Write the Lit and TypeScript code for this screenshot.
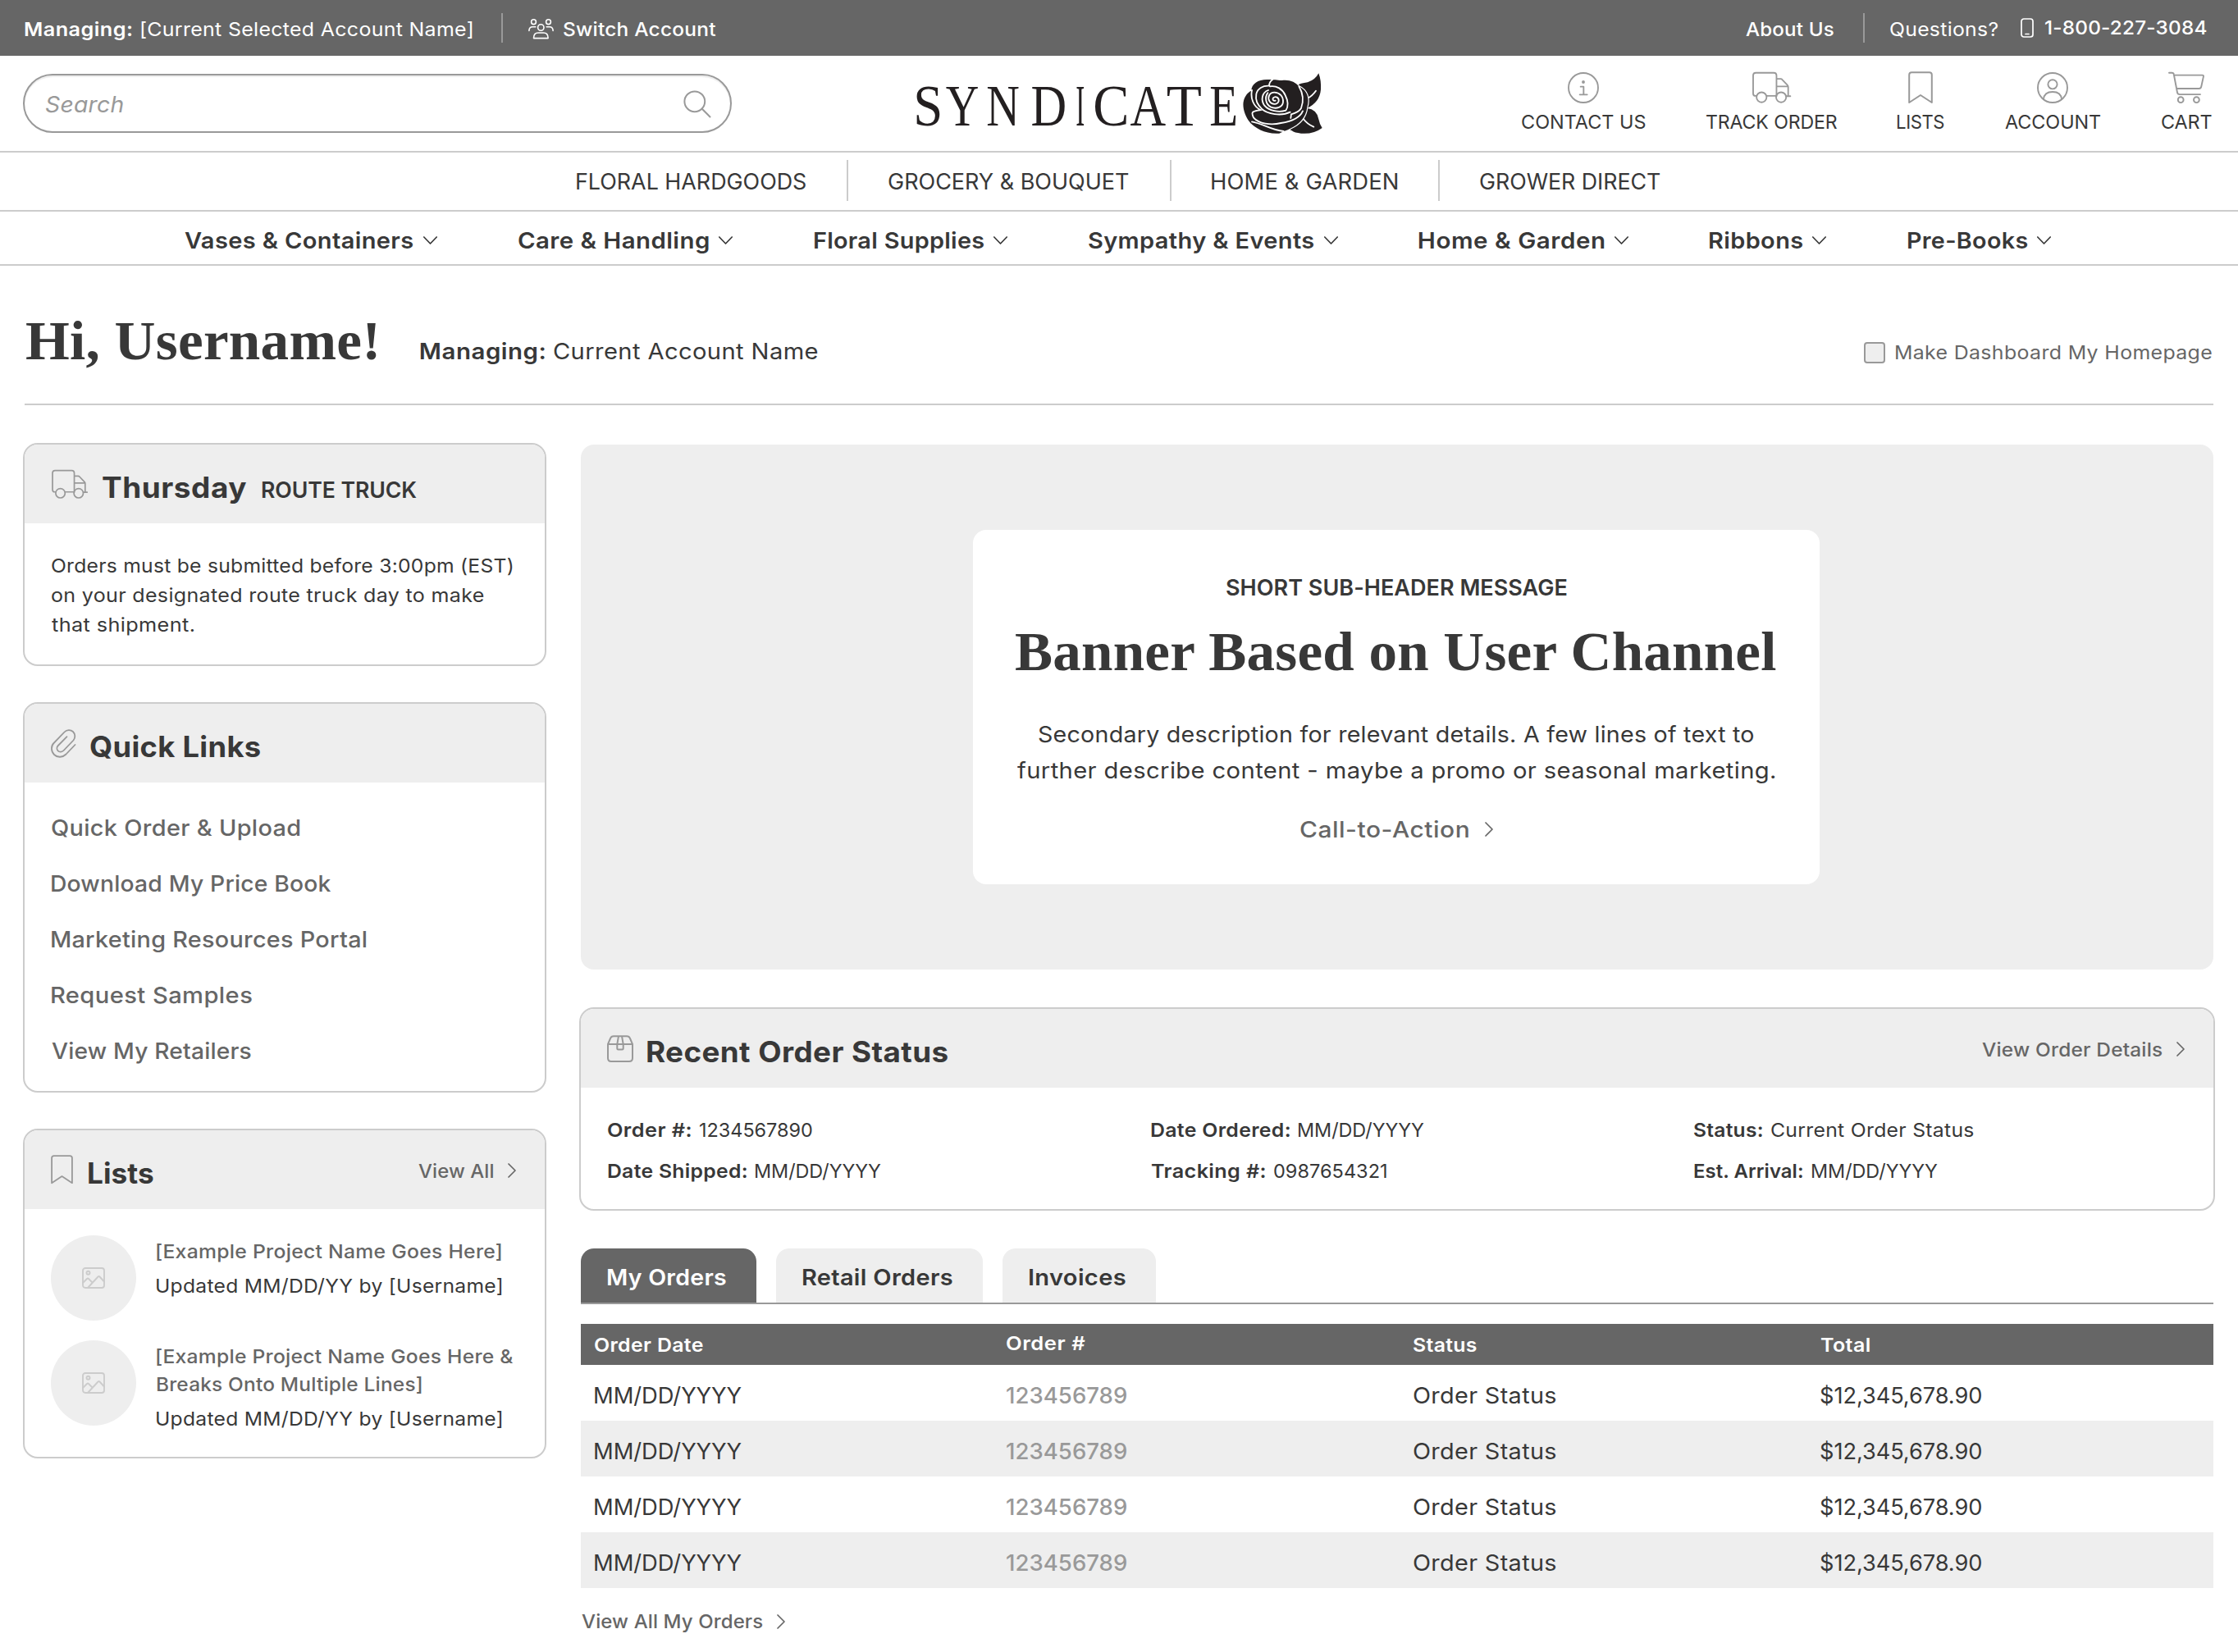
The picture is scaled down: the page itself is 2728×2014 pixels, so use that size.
import { LitElement, html, css, svg, nothing } from "lit";
import { customElement, property, query } from "lit/decorators.js";

/** A run of text whose letters are widened and spaced so that its ink fills the given width. */
@customElement("ink-text")
class InkText extends LitElement {
  @property({ type: Number }) w = 0;
  @property() text = "";
  @query("span") private run!: HTMLElement;

  static styles = css`
    :host {
      display: inline-block;
      white-space: pre;
      flex: none;
    }
    span {
      display: inline-block;
      transform-origin: 0 50%;
    }
  `;

  updated() {
    const cs = getComputedStyle(this);
    const ctx = document.createElement("canvas").getContext("2d")!;
    ctx.font = `${cs.fontStyle} ${cs.fontWeight} ${cs.fontSize} ${cs.fontFamily}`;
    const m = ctx.measureText(this.text);
    const ink = m.actualBoundingBoxLeft + m.actualBoundingBoxRight;
    const stretch = 1 + (this.w / ink - 1) * 0.7;
    this.style.width = `${this.w}px`;
    this.run.style.width = `${this.w}px`;
    this.run.style.letterSpacing = `${(this.w / stretch - ink) / (this.text.length - 1)}px`;
    this.run.style.textIndent = `${m.actualBoundingBoxLeft}px`;
    this.run.style.transform = `scaleX(${stretch})`;
  }

  render() {
    return html`<span>${this.text}</span>`;
  }
}

const t = (text: string, w: number, cls = "") =>
  html`<ink-text class=${cls || nothing} .text=${text} .w=${w}></ink-text>`;

const truck = html`<svg class="ico truck" viewBox="706 33 148 120">
  <path d="M724 123h-3q-9 0-9-9V48q0-10 10-10h66q10 0 10 10v76M763 123h34M798 60h15q4 0 6 3l19 20q3 3 3 7v33M798 88h43M834 124h15" />
  <circle cx="743" cy="128" r="18.5" /><circle cx="815" cy="128" r="18.5" />
</svg>`;
const bookmark = html`<svg class="ico bookmark" viewBox="0 0 30 40">
  <path d="M1.2 38V4.200q0-3 3-3h21.600q3 0 3 3V38L15 29z" />
</svg>`;
const right = html`<svg class="ico chev" viewBox="0 0 10 18"><path d="M1 1l8 8-8 8" /></svg>`;
const down = html`<svg class="ico down" viewBox="0 0 17 10"><path d="M.8 1l7.700 8 7.700-8" /></svg>`;
const picture = html`<svg class="ico picture" viewBox="0 0 28 26">
  <rect x="1" y="1" width="26" height="24" rx="3" />
  <circle cx="7.500" cy="6.800" r="2" />
  <path d="M1 19l5-5q1-1 2 0l4 4M7 25l12.500-13.500q1-1 2 0L27 17.500" />
</svg>`;
const infoIcon = html`<svg class="ico tool" viewBox="33 32 120 120" stroke-width="5.600">
  <circle cx="93" cy="92" r="54" />
  <circle cx="93" cy="71" r="3" /><path d="M83 88h11v29M80 117h27" />
</svg>`;
const accountIcon = html`<svg class="ico tool" viewBox="0 0 40 40" stroke-width="1.900">
  <circle cx="20" cy="20" r="18" /><circle cx="20" cy="15.800" r="5.600" />
  <path d="M9 34c.5-6 5-9 11-9s10.500 3 11 9" />
</svg>`;
const cartIcon = html`<svg class="ico cart" viewBox="0 0 44 40" stroke-width="1.900">
  <path d="M1 1.700h3.500q2 0 2.300 2l4.200 22q.4 2.400 3 2.400h25M7 4.600h34.500q1.800 0 1.400 1.800l-2.700 12.400q-.5 2.200-2.700 2.200H10.300" />
  <circle cx="15.200" cy="34.700" r="3.400" /><circle cx="34.400" cy="34.700" r="3.400" />
</svg>`;
const peopleIcon = html`<svg class="ico people" viewBox="0 0 31 25">
  <circle cx="6.500" cy="3.700" r="2.900" /><circle cx="24.500" cy="3.700" r="2.900" />
  <circle cx="15.300" cy="10.500" r="3.700" />
  <path d="M.9 14.500c0-3.300 1.800-4.800 4.300-4.800h3.600M30.100 14.500c0-3.300-1.800-4.800-4.300-4.800h-3.600M6.500 23.600c0-4.500 2.300-6.600 5.500-6.600h6.600c3.200 0 5.500 2.100 5.500 6.600z" />
</svg>`;
const phoneIcon = html`<svg class="ico phone" viewBox="0 0 16 24">
  <rect x="1" y="1" width="14" height="22" rx="3" /><path d="M6 19.500h4" />
</svg>`;
const searchIcon = html`<svg class="ico lens" viewBox="0 0 34 34">
  <circle cx="13.800" cy="13.800" r="12.400" /><path d="M22.800 22.800L32.500 32.500" />
</svg>`;
const clipIcon = html`<svg class="ico clip" viewBox="0 0 31 35">
  <path d="M29.500 19L18.500 30.500C14.500 34.500 8 35 4 31C0 27 0 20.500 3.500 17L16.500 3.500C19.500.5 24 .3 27 3C30 6 30 10.500 27.500 13.500L15.500 26C13.500 28 10.500 28 8.700 26.300C7 24.500 7 21.800 8.800 20L19.500 9.200" />
</svg>`;
const boxIcon = html`<svg class="ico box" viewBox="0 0 32 33">
  <path d="M1 11L4 4Q5 1.200 8 1.200H24Q27 1.200 28 4L31 11V28q0 4-4 4H5q-4 0-4-4zM1 11H31M14 1.200L12.300 11V16q0 1.500 1.500 1.500h4.400q1.500 0 1.500-1.500V11L18 1.200" />
</svg>`;

/* letter, left edge, horizontal scale */
const logoLetters: [string, number, number][] = [
  ["S", 3.3, 0.9], ["Y", 42.8, 0.78], ["N", 92.3, 0.78], ["D", 146.5, 0.84], ["I", 201.3, 0.46],
  ["C", 222.2, 0.92], ["A", 267.6, 0.84], ["T", 311.8, 0.98], ["E", 364.3, 0.79],
];
const logo = html`<svg class="logo" viewBox="0 0 512 90">
  ${logoLetters.map(([c, x, s]) => svg`<text transform="translate(${x} 72.5) scale(${s} 1)">${c}</text>`)}
  <g transform="translate(396 0) scale(.3333)">
    <path class="ink" d="M222 74Q238 64 264 61Q292 52 304 28Q314 54 312 88Q308 134 262 156Q298 160 304 196Q308 216 317 228Q284 252 240 248Q216 246 206 238L170 220L200 90z" />
    <path class="cut" d="M262 120Q280 112 294 92M246 192Q262 214 286 224" />
    <path class="halo" d="M160 248C110 252 66 226 52 206C34 184 24 150 30 128C34 112 44 98 58 92C58 66 84 50 118 51C140 50 160 54 170 54C196 50 220 60 232 76C262 90 272 120 262 152C258 190 232 216 200 230C190 236 174 240 160 248z" />
    <path class="cut" d="M60 90C54 120 66 150 92 162C66 168 54 166 66 190C84 212 130 220 166 210C204 204 236 190 246 166" />
    <path class="cut" d="M60 205C100 212 130 236 176 240" />
    <path class="cut" d="M136 50C126 58 122 66 124 74C100 72 80 84 76 104C72 128 80 142 96 158C116 178 168 186 200 170" />
    <path class="cut" d="M232 76C246 100 250 130 240 156C234 166 226 172 204 178L202 192" />
    <path class="cut" d="M126 76C150 72 172 86 182 108C192 128 196 146 184 164C160 172 122 166 106 146C92 126 96 98 120 90" />
    <path class="cut" d="M118 100C106 116 110 142 130 152C150 160 172 152 174 134C176 112 160 98 142 98C124 98 116 116 124 130C132 144 154 144 158 130C160 116 146 110 138 118C134 124 138 130 146 128" />
  </g>
</svg>`;

@customElement("app-root")
class AppRoot extends LitElement {
  private channels: [string, number][] = [
    ["FLORAL HARDGOODS", 279], ["GROCERY & BOUQUET", 293], ["HOME & GARDEN", 226], ["GROWER DIRECT", 220],
  ];
  private categories: [string, number][] = [
    ["Vases & Containers", 278], ["Care & Handling", 232], ["Floral Supplies", 206],
    ["Sympathy & Events", 274], ["Home & Garden", 225], ["Ribbons", 113], ["Pre-Books", 145],
  ];
  private links: [string, number][] = [
    ["Quick Order & Upload", 302], ["Download My Price Book", 341], ["Marketing Resources Portal", 383],
    ["Request Samples", 244], ["View My Retailers", 243],
  ];
  private details: [string, number, string, number][] = [
    ["Order #:", 101, "1234567890", 137], ["Date Ordered:", 169, "MM/DD/YYYY", 153], ["Status:", 83, "Current Order Status", 247],
    ["Date Shipped:", 169, "MM/DD/YYYY", 153], ["Tracking #:", 139, "0987654321", 137], ["Est. Arrival:", 132.5, "MM/DD/YYYY", 153],
  ];

  render() {
    return html`
      <div class="topbar">
        ${t("Managing:", 130.5, "b")}
        ${t("[Current Selected Account Name]", 403, "acct")}
        <i class="vline"></i>${peopleIcon}${t("Switch Account", 185.5, "m")}
        <span class="grow"></span>
        ${t("About Us", 107, "m")}<i class="vline"></i>${t("Questions?", 131)}
        <span class="tel">${phoneIcon}${t("1-800-227-3084", 197, "m")}</span>
      </div>

      <header class="header">
        <div class="search">${t("Search", 96)}${searchIcon}</div>
        ${logo}
        <nav class="tools">
          <a>${infoIcon}${t("CONTACT US", 150.5)}</a>
          <a>${truck}${t("TRACK ORDER", 159.5)}</a>
          <a>${bookmark}${t("LISTS", 56.5)}</a>
          <a>${accountIcon}${t("ACCOUNT", 117)}</a>
          <a>${cartIcon}${t("CART", 61.5)}</a>
        </nav>
      </header>

      <nav class="channels">
        ${this.channels.map(([n, w], i) => html`${i ? html`<i class="vline"></i>` : nothing}${t(n, w)}`)}
      </nav>
      <nav class="categories">
        ${this.categories.map(([n, w]) => html`<a>${t(n, w)}${down}</a>`)}
      </nav>

      <section class="hello">
        ${t("Hi, Username!", 426.5, "title")}
        ${t("Managing:", 151, "b who")}
        ${t("Current Account Name", 321.5, "name")}
        <span class="grow"></span>
        <label class="home"><i class="check"></i>${t("Make Dashboard My Homepage", 385)}</label>
      </section>

      <main class="content">
        <div class="col left">
          <section class="card route">
            <div class="head">${truck}<div class="base">${t("Thursday", 175.5, "h")}${t("ROUTE TRUCK", 189, "sub")}</div></div>
            <div class="copy">
              ${t("Orders must be submitted before 3:00pm (EST)", 562)}
              ${t("on your designated route truck day to make", 526.5)}
              ${t("that shipment.", 173)}
            </div>
          </section>
          <section class="card quick">
            <div class="head">${clipIcon}<div class="base">${t("Quick Links", 207.5, "h")}</div></div>
            <div class="links">${this.links.map(([n, w]) => t(n, w))}</div>
          </section>
          <section class="card lists">
            <div class="head">${bookmark}<div class="base">${t("Lists", 79, "h")}</div>
              <span class="grow"></span><a class="more">${t("View All", 91.5)}${right}</a></div>
            <div class="projects">
              <div class="project"><span class="thumb">${picture}</span>
                <div class="lines">
                  ${t("[Example Project Name Goes Here]", 420, "m")}
                  ${t("Updated MM/DD/YY by [Username]", 420, "when")}
                </div></div>
              <div class="project"><span class="thumb">${picture}</span>
                <div class="lines">
                  ${t("[Example Project Name Goes Here &", 435, "m")}
                  ${t("Breaks Onto Multiple Lines]", 323, "m")}
                  ${t("Updated MM/DD/YY by [Username]", 420, "when")}
                </div></div>
            </div>
          </section>
        </div>

        <div class="col right">
          <section class="banner"><div class="promo">
            ${t("SHORT SUB-HEADER MESSAGE", 414.5, "sub")}
            ${t("Banner Based on User Channel", 929, "title")}
            <div class="desc">
              ${t("Secondary description for relevant details. A few lines of text to", 872)}
              ${t("further describe content - maybe a promo or seasonal marketing.", 923.5)}
            </div>
            <a class="cta">${t("Call-to-Action", 205)}${right}</a>
          </div></section>

          <section class="card recent">
            <div class="head">${boxIcon}<div class="base">${t("Recent Order Status", 366.5, "h")}</div>
              <span class="grow"></span><a class="more">${t("View Order Details", 219.5)}${right}</a></div>
            <div class="details">
              ${this.details.map(([k, kw, v, vw]) => html`<div class="pair">${t(k, kw, "b")}${t(v, vw)}</div>`)}
            </div>
          </section>

          <div class="tabs">
            <a class="tab on">${t("My Orders", 143.5)}</a>
            <a class="tab">${t("Retail Orders", 181.5)}</a>
            <a class="tab">${t("Invoices", 116.5)}</a>
          </div>
          <div class="table">
            <div class="row th">${t("Order Date", 131.5)}${t("Order #", 95.5, "up")}${t("Status", 76.5)}${t("Total", 60)}</div>
            ${[0, 1, 2, 3].map(() => html`<div class="row">
              ${t("MM/DD/YYYY", 178.5)}${t("123456789", 146, "num")}${t("Order Status", 174)}${t("$12,345,678.90", 196)}
            </div>`)}
          </div>
          <a class="all">${t("View All My Orders", 220.5)}${right}</a>
        </div>
      </main>
    `;
  }

  static styles = css`
    :host {
      display: flex;
      flex-direction: column;
      width: 2728px;
      height: 2014px;
      overflow: hidden;
      background: #fff;
      color: #383838;
      font: 400 23.5px/24px Inter, "Open Sans", "Liberation Sans", sans-serif;
    }
    * { box-sizing: border-box; }
    .ico {
      flex: none;
      display: block;
      fill: none;
      stroke: #999;
      stroke-linecap: round;
      stroke-linejoin: round;
      overflow: visible;
    }
    .grow { flex: 1; }
    .b { font-weight: 600; }
    .m { font-weight: 500; }
    .vline { flex: none; width: 2px; background: #ccc; }

    .topbar {
      flex: none;
      display: flex;
      align-items: center;
      height: 68px;
      padding: 3px 38px 0 30px;
      background: #666;
      color: #fff;
    }
    .acct { margin-left: 11px; }
    .topbar .vline { height: 36px; margin: 0 31px 3px 36px; background: #999; }
    .people { width: 31px; height: 25px; stroke: #fff; stroke-width: 1.6; margin-right: 12px; }
    .tel { display: flex; align-items: center; padding-bottom: 4px; margin-left: 28px; }
    .phone { width: 16px; height: 24px; stroke: #fff; stroke-width: 1.7; margin-right: 14px; }

    .header {
      flex: none;
      display: flex;
      align-items: center;
      height: 118px;
      padding: 0 32px 0 28px;
      border-bottom: 2px solid #ccc;
    }
    .search {
      display: flex;
      align-items: center;
      justify-content: space-between;
      width: 864px;
      height: 72px;
      padding: 1px 23px 0 25px;
      border: 2px solid #999;
      border-radius: 36px;
      box-shadow: inset 0 2px 1px #eee;
      color: #999;
      font-size: 27.5px;
      font-style: italic;
    }
    .lens { width: 34px; height: 34px; stroke-width: 2; }
    .logo { width: 512px; height: 90px; margin: 0 0 2px 218px; overflow: visible; }
    .logo text { font: 72px "Liberation Serif", serif; fill: #231f20; }
    .ink { fill: #231f20; }
    .halo { fill: #231f20; stroke: #fff; stroke-width: 7; paint-order: stroke; }
    .cut { fill: none; stroke: #fff; stroke-width: 5.5; stroke-linecap: round; }
    .tools {
      display: flex;
      gap: 74px;
      align-self: flex-start;
      margin-left: auto;
      padding-top: 19px;
    }
    .tools a { display: flex; flex-direction: column; align-items: center; gap: 10px; }
    .tool { width: 40px; height: 40px; }
    .truck { width: 49px; height: 40px; stroke-width: 5.6; }
    .bookmark { width: 30px; height: 40px; stroke-width: 2; }
    .cart { width: 44px; height: 40px; }

    .channels {
      flex: none;
      display: flex;
      align-items: center;
      height: 72px;
      padding: 1px 0 0 703px;
      border-bottom: 2px solid #ccc;
      font-size: 27px;
    }
    .channels .vline { height: 50px; margin: 0 49px 3px 50px; }
    .categories {
      flex: none;
      display: flex;
      align-items: center;
      gap: 99.3px;
      height: 66px;
      padding: 5px 0 0 225px;
      border-bottom: 2px solid #ccc;
      font-size: 27.5px;
      font-weight: 600;
    }
    .categories a { display: flex; align-items: center; gap: 12.5px; }
    .down { width: 17px; height: 10px; stroke: #383838; stroke-width: 1.7; }

    .title { font: 700 68px/80px "Liberation Serif", serif; }
    .hello {
      flex: none;
      display: flex;
      align-items: baseline;
      height: 170px;
      margin: 0 30px;
      padding: 51px 2px 0;
      border-bottom: 2px solid #ccc;
      font-size: 27.5px;
    }
    .who { margin-left: 54px; }
    .name { margin-left: 11px; }
    .home {
      display: flex;
      align-items: center;
      gap: 13px;
      align-self: flex-start;
      height: 28px;
      margin-top: 41px;
      font-size: 23.5px;
      color: #666;
    }
    .check { width: 26px; height: 26px; border: 2px solid #999; border-radius: 4px; background: #eee; }

    .content {
      display: grid;
      grid-template-columns: 638px 1994px;
      column-gap: 40px;
      padding: 46px 28px 0;
    }
    .col { display: flex; flex-direction: column; }
    .left { gap: 44px; }
    .card { border: 2px solid #ccc; border-radius: 18px; overflow: hidden; background: #fff; }
    .route { height: 272px; }
    .quick { height: 476px; }
    .lists { height: 402px; }
    .recent { height: 248px; margin-top: 46px; }
    .head {
      display: flex;
      align-items: center;
      height: 96px;
      padding: 0 35px 0 32px;
      background: #eee;
    }
    .base { display: flex; align-items: baseline; padding-top: 7px; margin-left: 17px; }
    .h { font-size: 35px; line-height: 40px; font-weight: 700; }
    .sub { font-size: 27px; font-weight: 600; }
    .base .sub { margin-left: 18px; }
    .head .truck { width: 46px; height: 37px; }
    .head .bookmark { width: 27px; height: 36px; margin-right: 2px; }
    .clip { width: 31px; height: 35px; stroke-width: 1.8; }
    .box { width: 32px; height: 33px; stroke-width: 2; }
    .chev { width: 10px; height: 18px; stroke: #666; stroke-width: 1.7; }
    .more { display: flex; align-items: center; gap: 18px; padding-top: 3px; color: #666; font-weight: 500; }
    .more .chev { margin-bottom: 2px; }
    .copy { display: flex; flex-direction: column; padding: 33.5px 32px 0 33px; line-height: 36px; }
    .links {
      display: flex;
      flex-direction: column;
      padding: 21px 33px 0;
      font-size: 27.5px;
      font-weight: 500;
      line-height: 68px;
      color: #666;
    }
    .projects { display: flex; flex-direction: column; gap: 24px; padding: 32px 32px 0; }
    .project { display: flex; gap: 25px; height: 104px; }
    .thumb {
      flex: none;
      display: flex;
      align-items: center;
      justify-content: center;
      width: 104px;
      height: 104px;
      border-radius: 50%;
      background: #eee;
    }
    .picture { width: 28px; height: 26px; stroke: #ccc; stroke-width: 1.9; }
    .lines { display: flex; flex-direction: column; padding-top: 3px; line-height: 34px; }
    .lines .m { color: #666; }
    .when { margin-top: 8px; }

    .banner {
      display: flex;
      align-items: center;
      justify-content: center;
      height: 640px;
      margin: 2px 2px 0;
      border-radius: 16px;
      background: #eee;
    }
    .promo {
      display: flex;
      flex-direction: column;
      align-items: center;
      width: 1032px;
      height: 432px;
      margin-right: 2px;
      padding-top: 51px;
      border-radius: 16px;
      background: #fff;
      font-size: 27.5px;
    }
    .promo .sub { line-height: 40px; }
    .promo .title { margin-top: 17px; }
    .desc { display: flex; flex-direction: column; align-items: center; margin-top: 39px; line-height: 44px; }
    .cta {
      display: flex;
      align-items: center;
      gap: 20px;
      margin-top: 30px;
      line-height: 40px;
      font-weight: 500;
      color: #666;
    }

    .details {
      display: grid;
      grid-template-columns: 662px 662px 1fr;
      padding: 27px 0 0 33px;
      line-height: 50px;
    }
    .pair { display: flex; gap: 11px; }

    .tabs {
      display: flex;
      gap: 24px;
      height: 68px;
      margin: 46px 2px 0;
      border-bottom: 2px solid #999;
    }
    .tab {
      height: 66px;
      padding: 2px 37.5px 0 33px;
      border-radius: 16px 16px 0 0;
      background: #eee;
      font-size: 27.5px;
      font-weight: 600;
      line-height: 66px;
    }
    .tab.on { background: #666; color: #fff; }
    .table { margin: 24px 2px 0; }
    .row {
      display: grid;
      grid-template-columns: 502px 496px 496px 1fr;
      height: 68px;
      padding: 4px 0 0 17px;
      font-size: 27.5px;
      line-height: 66px;
    }
    .row:nth-child(odd) { background: #eee; }
    .row.th {
      height: 50px;
      padding-top: 1px;
      background: #666;
      color: #fff;
      font-size: 23.5px;
      font-weight: 600;
      line-height: 50px;
    }
    .up { line-height: 46px; }
    .num { color: #999; font-weight: 500; }
    .all {
      display: flex;
      align-items: center;
      gap: 17px;
      margin: 21px 3px 0;
      line-height: 40px;
      font-weight: 500;
      color: #666;
    }
  `;
}
